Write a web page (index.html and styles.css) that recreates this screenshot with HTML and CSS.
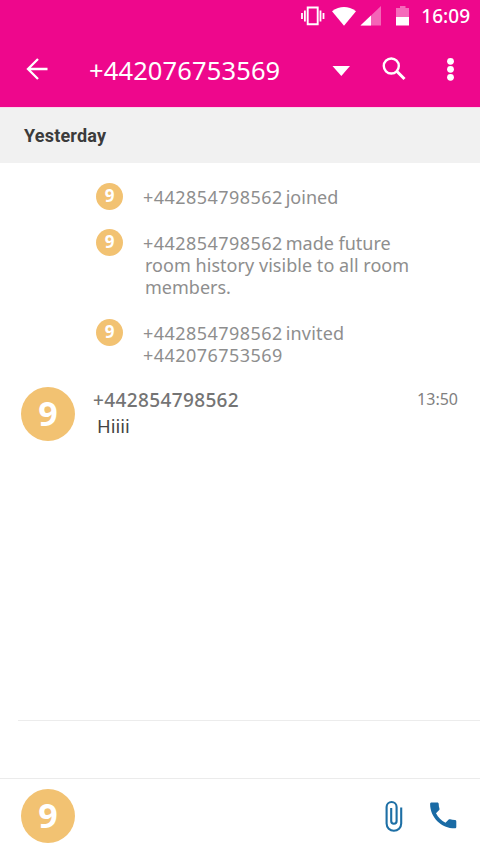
FILE: index.html
```html
<!DOCTYPE html>
<html lang="en">
<head>
<meta charset="utf-8">
<title>Chat</title>
<link rel="stylesheet" href="styles.css">
</head>
<body>
<header class="top">
  <div class="status">
    <svg width="112" height="22" viewBox="300 5 112 22" fill="#fff">
      <path d="M307.700 7.500h10v16.800h-10z" fill="none" stroke="#fff" stroke-width="1.900"/>
      <path d="M304.900 10.500v11M320.500 10.500v11M302 13v6M323.500 13v6" stroke="#fff" stroke-width="1.800"/>
      <path d="M332 11.200Q344 2.800 356 11.200L344 25.700z"/>
      <path d="M381 6v19.500h-20.500z" opacity=".38"/>
      <path d="M371 15.500v10h-10.500z"/>
      <path d="M396 8h4V6h5.500v2h3.500v9h-13z" opacity=".4"/>
      <path d="M396 17h13v8.500h-13z"/>
    </svg>
    <span class="clock">16:09</span>
  </div>
  <div class="bar">
    <svg class="back" width="24" height="24" viewBox="0 0 24 24" fill="none" stroke="#fff" stroke-width="2.300"><path d="M22.500 12H3M13 2 3 12 13 22"/></svg>
    <h1 class="title">+442076753569</h1>
    <svg class="tools" width="130" height="30" viewBox="330 55 130 30" fill="#fff">
      <path d="M332.500 66H350l-8.700 10z"/>
      <g fill="none" stroke="#fff"><circle cx="391.300" cy="66" r="7.500" stroke-width="2.400"/><path d="m397 71.500 7.500 7.500" stroke-width="3"/></g>
      <circle cx="450.500" cy="61.300" r="3.400"/><circle cx="450.500" cy="69.300" r="3.400"/><circle cx="450.500" cy="77.300" r="3.400"/>
    </svg>
  </div>
</header>
<div class="day">Yesterday</div>
<main class="feed">
  <section class="event"><span class="avatar small">9</span><p><span class="number">+442854798562</span><span class="w-joined">joined</span></p></section>
  <section class="event"><span class="avatar small">9</span><p><span class="number">+442854798562</span><span class="w-made">made future</span><br><span class="w-room">room history visible to all room</span><br><span class="w-members">members.</span></p></section>
  <section class="event"><span class="avatar small">9</span><p><span class="number">+442854798562</span><span class="w-invited">invited</span><br><span class="number">+442076753569</span></p></section>
  <section class="message">
    <span class="avatar">9</span>
    <div class="body"><div class="head"><b class="sender">+442854798562</b><time>13:50</time></div><p class="text">Hiiii</p></div>
  </section>
</main>
<div class="typing"></div>
<footer class="composer">
  <span class="avatar">9</span>
  <svg width="76" height="40" viewBox="382 796 76 40">
    <path d="M401.200 807.500V823.500a7.300 7.300 0 0 1-14.600 0V807a5 5 0 0 1 10 0V821a2.700 2.700 0 0 1-5.400 0V808" fill="none" stroke="#1d6fa5" stroke-width="2.100"/>
    <path d="M431.500 802.500h5.800c.8 0 1.400.6 1.400 1.400 0 1.700.3 3.300.8 4.800.1.500 0 1-.3 1.400l-3.200 3.200c2.100 4.100 5.400 7.400 9.500 9.500l3.200-3.200c.4-.4.900-.5 1.400-.3 1.500.5 3.100.8 4.800.8.800 0 1.400.6 1.400 1.400v5.400c0 .8-.6 1.400-1.400 1.400-13.700 0-24.800-11.100-24.800-24.400 0-.8.600-1.400 1.400-1.400z" fill="#1a6ba5"/>
  </svg>
</footer>
</body>
</html>
```
FILE: styles.css
```css
* { box-sizing: border-box; }
body {
  margin: 0;
  width: 480px;
  height: 853px;
  display: flex;
  flex-direction: column;
  background: #fff;
  font-family: "Noto Sans", sans-serif;
  overflow: hidden;
}
p, h1 { margin: 0; }
svg { display: block; flex: none; }
.top { height: 107px; background: #ee078c; color: #fff; }
.status {
  height: 32px;
  padding: 5px 10px 0 300px;
  display: flex;
  justify-content: space-between;
}
.clock { font-size: 19px; line-height: 23px; font-weight: 500; }
.bar { height: 75px; display: flex; padding-left: 25px; }
.back { margin-top: 25px; }
.title {
  width: 241px;
  margin-left: 40px;
  padding-top: 20px;
  font-size: 25.500px;
  line-height: 36px;
  font-weight: 400;
  letter-spacing: .13px;
}
.tools { margin-top: 23px; }
.day {
  height: 56px;
  padding-left: 24px;
  border-top: 1px solid #f9d9ec;
  background: #f1f1f1;
  color: #3b3b3b;
  font: 700 18px/56px Roboto, sans-serif;
  letter-spacing: .2px;
}
.feed { height: 557px; padding-top: 20px; }
.event {
  display: flex;
  padding-left: 96px;
  margin-bottom: 18px;
  color: #8e8e8e;
  font-size: 18px;
  line-height: 22px;
}
.event:nth-child(2) { margin-bottom: 21px; }
.event p { margin-left: 20px; padding-top: 3px; white-space: nowrap; }
.avatar {
  flex: none;
  width: 54px;
  height: 54px;
  border-radius: 50%;
  background: #f2c272;
  color: #fff;
  font-size: 34px;
  line-height: 52px;
  font-weight: 700;
  text-align: center;
}
.avatar.small { width: 27px; height: 27px; margin-bottom: 1px; font-size: 17px; line-height: 26px; }
.number { letter-spacing: .45px; }
.w-joined, .w-made, .w-invited { margin-left: 3px; }
.w-invited { letter-spacing: .2px; }
.w-room, .w-members { margin-left: 2px; }
.w-room { letter-spacing: .04px; }
.message { display: flex; padding: 3px 22px 0 21px; }
.body { flex: 1; margin-left: 18px; }
.head { display: flex; justify-content: space-between; color: #747474; }
.sender { font-size: 19px; line-height: 26px; font-weight: 500; letter-spacing: .37px; }
time { font-size: 16px; line-height: 25px; color: #808080; }
.text { padding-left: 4px; font-size: 18.500px; line-height: 26px; color: #444; }
.typing { height: 58px; margin-left: 18px; border-top: 1px solid #ececec; }
.composer {
  height: 75px;
  display: flex;
  justify-content: space-between;
  padding: 10px 22px 0 21px;
  border-top: 1px solid #ebebeb;
}
.composer svg { margin-top: 7px; }
```
